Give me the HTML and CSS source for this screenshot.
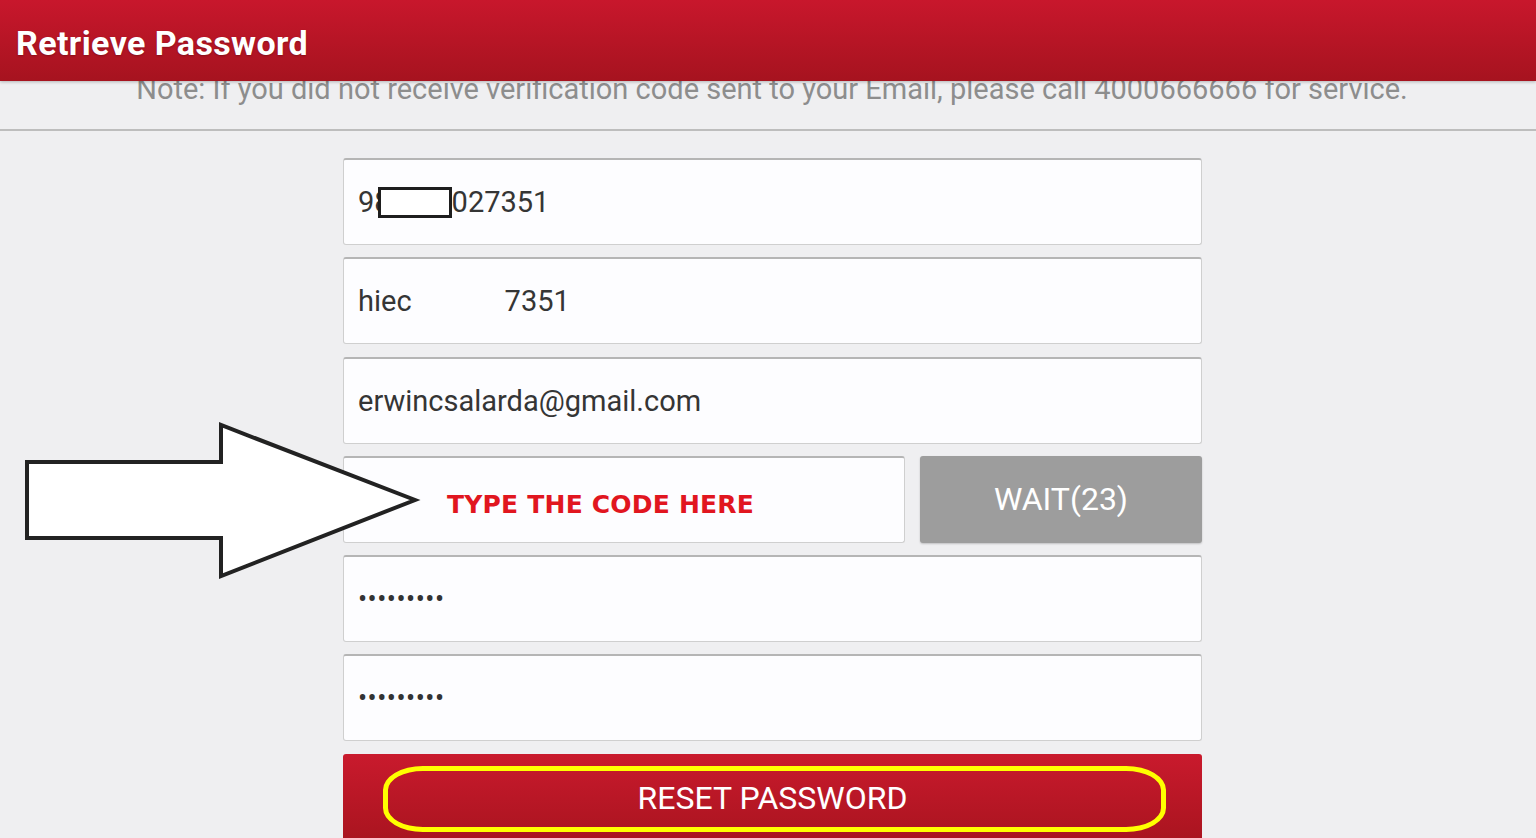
FILE: index.html
```html
<!DOCTYPE html>
<html lang="en">
<head>
<meta charset="utf-8">
<title>Retrieve Password</title>
<link rel="stylesheet" href="styles.css">
</head>
<body>
<header class="appbar">
  <h1 class="title">Retrieve Password</h1>
</header>
<main class="page">
  <p class="note">Note: If you did not receive verification code sent to your Email, please call 4000666666 for service.</p>
  <form class="form">
    <div class="field"><span>98</span><span class="redact"></span><span class="after-redact">027351</span></div>
    <div class="field"><span>hiec</span><span class="gap-text">7351</span></div>
    <div class="field"><span>erwincsalarda@gmail.com</span></div>
    <div class="row">
      <div class="field code"><span class="placeholder">TYPE THE CODE HERE</span></div>
      <button type="button" class="wait">WAIT(23)</button>
    </div>
    <div class="field pw"><span class="dots">•••••••••</span></div>
    <div class="field pw"><span class="dots">•••••••••</span></div>
    <button type="button" class="reset"><span class="reset-label">RESET PASSWORD</span><span class="highlight"></span></button>
  </form>
</main>
<svg class="arrow" width="410" height="166" viewBox="0 0 410 166">
  <polygon points="7,44 201,44 201,7 395,82 201,158 201,120 7,120" fill="#ffffff" stroke="#222222" stroke-width="4" stroke-linejoin="miter"/>
</svg>
</body>
</html>
```
FILE: styles.css
```css
html, body {
  margin: 0;
  padding: 0;
  overflow: hidden;
  height: 838px;
}
body {
  background: #efeff1;
  font-family: Roboto, "Noto Sans", sans-serif;
  color: #333333;
}
.appbar {
  position: relative;
  z-index: 2;
  height: 81px;
  background: linear-gradient(#c8172c, #a6131f);
  box-shadow: 0 1px 3px rgba(0, 0, 0, 0.25);
  display: flex;
  align-items: center;
  padding: 4px 0 0 16px;
  box-sizing: border-box;
}
.title {
  margin: 0;
  font-size: 34px;
  font-weight: 700;
  color: #ffffff;
  letter-spacing: 0.4px;
  text-shadow: 0 1px 2px rgba(0, 0, 0, 0.25);
}
.page {
  display: block;
}
.note {
  position: relative;
  z-index: 1;
  margin: -8px 0 0 0;
  padding: 0 0 24px 8px;
  font-size: 29px;
  line-height: 32px;
  color: #8d8d8d;
  text-align: center;
  border-bottom: 2px solid #bdbdbd;
  white-space: nowrap;
}
.form {
  margin: 27px 0 0 343px;
  width: 859px;
  display: flex;
  flex-direction: column;
  gap: 12.3px;
}
.field {
  height: 87px;
  box-sizing: border-box;
  background: #fdfdff;
  border: 1px solid #cfcfcf;
  border-top: 2px solid #b5b5b5;
  border-radius: 3px;
  padding: 0 14px;
  display: flex;
  align-items: center;
  font-size: 29px;
  color: #353535;
}
.redact {
  position: relative;
  z-index: 1;
  display: inline-block;
  width: 74px;
  height: 31px;
  box-sizing: border-box;
  border: 3px solid #1e1e1e;
  background: #ffffff;
  margin-left: -13px;
}
.after-redact {
  margin-left: 0;
}
.gap-text {
  margin-left: 93px;
}
.row {
  display: flex;
  gap: 15px;
}
.code {
  width: 562px;
  padding-left: 103px;
  padding-top: 10px;
}
.placeholder {
  font-family: "DejaVu Sans", sans-serif;
  font-weight: 700;
  font-size: 25px;
  color: #e1161f;
  letter-spacing: 0.2px;
}
.wait {
  width: 282px;
  height: 87px;
  border: none;
  border-radius: 3px;
  background: #9d9d9d;
  color: #ffffff;
  font-family: Roboto, sans-serif;
  font-size: 32px;
  box-shadow: 0 1px 2px rgba(0, 0, 0, 0.2);
  padding: 0;
}
.dots {
  font-size: 27px;
  letter-spacing: 0.5px;
  color: #333333;
}
.reset {
  position: relative;
  height: 88px;
  border: none;
  border-radius: 3px 3px 0 0;
  background: linear-gradient(#c91a2d, #a9141f);
  color: #ffffff;
  font-family: Roboto, sans-serif;
  font-size: 32px;
  padding: 0;
}
.highlight {
  position: absolute;
  left: 40px;
  top: 12px;
  width: 783px;
  height: 66px;
  box-sizing: border-box;
  border: 5px solid #ffff00;
  border-radius: 40px / 24px;
}
.arrow {
  position: absolute;
  left: 20px;
  top: 418px;
  z-index: 3;
}
```
